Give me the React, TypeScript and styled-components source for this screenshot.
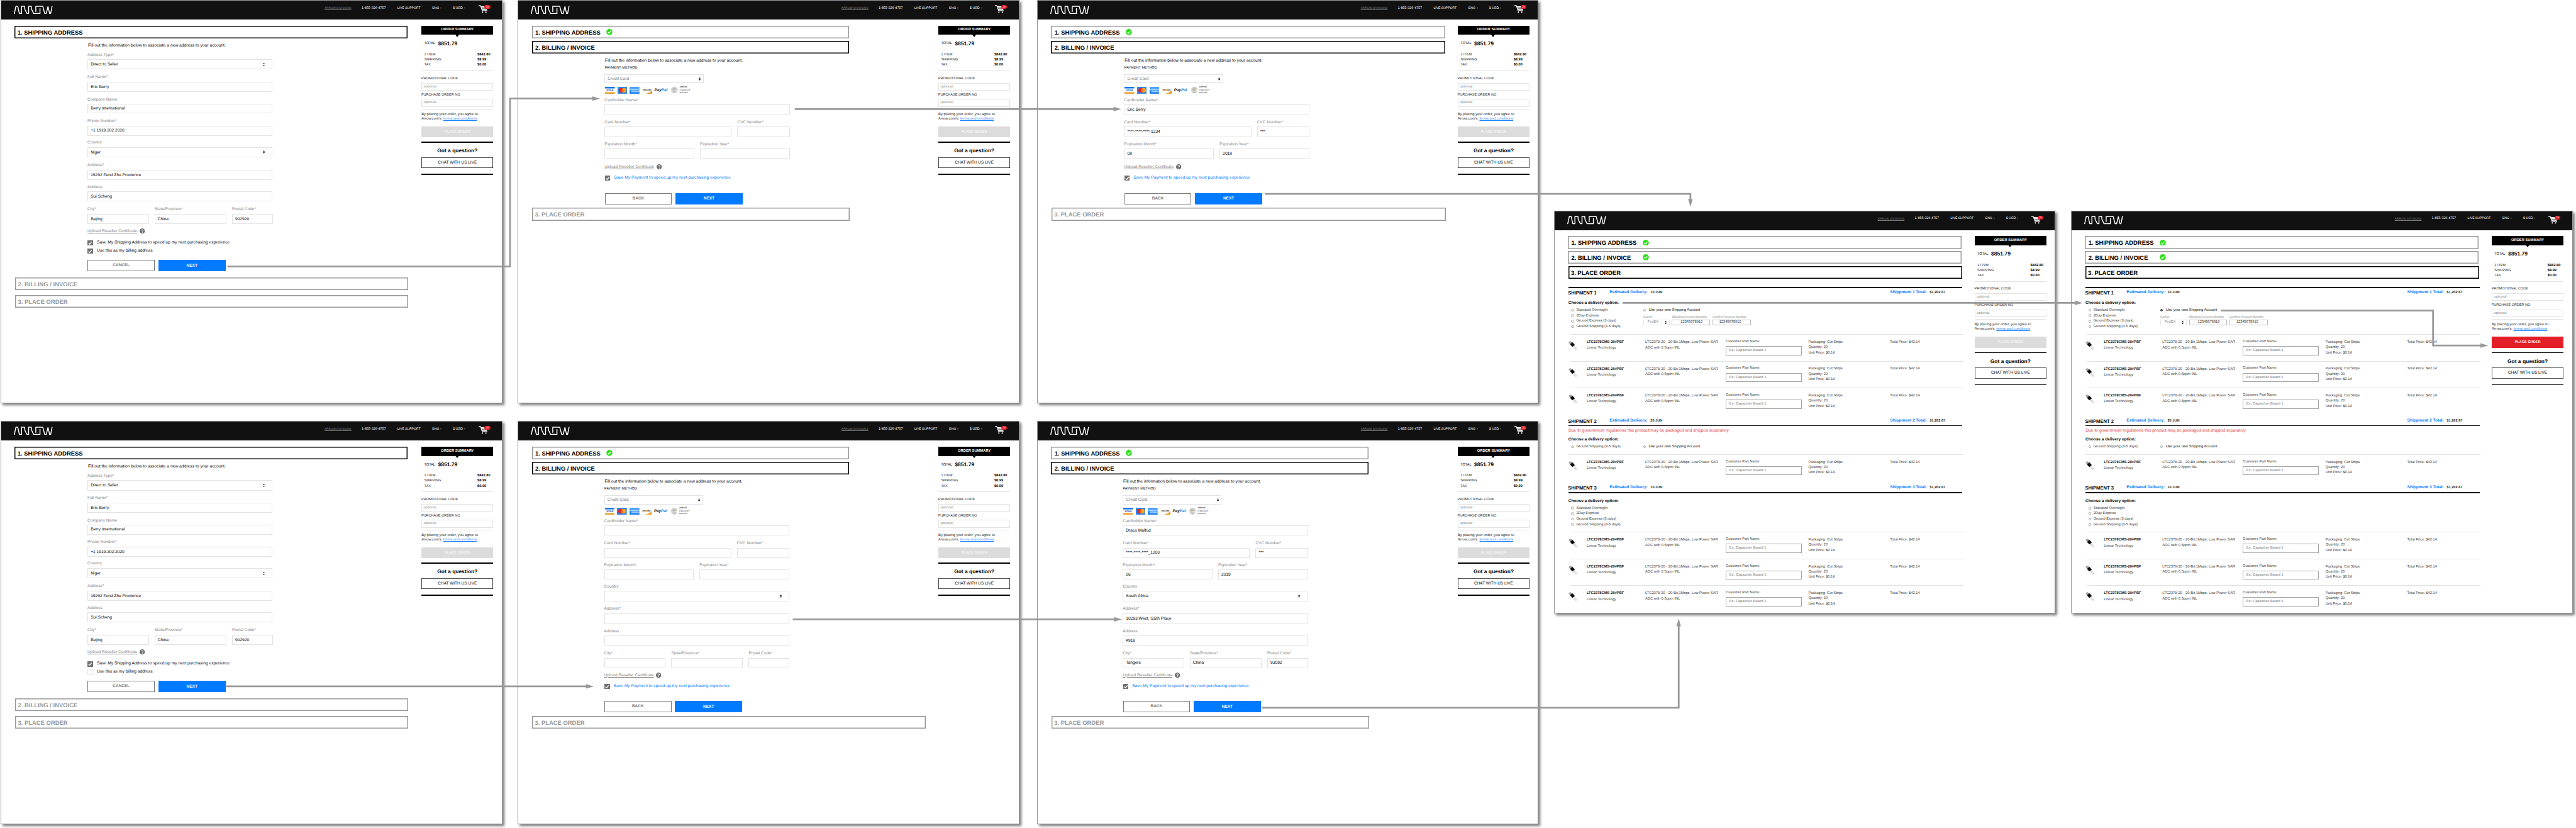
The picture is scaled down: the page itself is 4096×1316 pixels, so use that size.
import React from "react";
import styled, { createGlobalStyle, css } from "styled-components";

const GlobalStyle = createGlobalStyle`
  * { box-sizing: border-box; }
  body {
    margin: 0;
    background: #fff;
    color: #000;
    font-family: "Liberation Sans", Arial, Helvetica, sans-serif;
    text-rendering: geometricPrecision;
  }
`;

const BLUE = "#007aff";
const GREY = "#999";

/* ---------- canvas ---------- */

const Viewport = styled.div`
  width: 4096px;
  height: 1316px;
  overflow: hidden;
`;

const Canvas = styled.main`
  position: relative;
  width: 6379px;
  height: 2049px;
  zoom: 0.64211;
`;

const Artboard = styled.section<{ $x: number; $y: number }>`
  position: absolute;
  left: ${(p) => p.$x}px;
  top: ${(p) => p.$y}px;
  width: 1242px;
  height: 998px;
  display: flex;
  flex-direction: column;
  background: #fff;
  border: 2px solid ${GREY};
  box-shadow: 4px 5px 6px rgba(0, 0, 0, 0.5);
  white-space: nowrap;
`;

const FlowLayer = styled.svg`
  position: absolute;
  inset: 0;
  pointer-events: none;
`;

/* ---------- header ---------- */

const Header = styled.header`
  flex: none;
  height: 47px;
  display: flex;
  align-items: flex-start;
  background: #111;
  color: #fff;
`;

const LogoBox = styled.div`
  width: 800px;
  padding: 11.7px 0 0 31.3px;
  line-height: 0;
`;

const NavItem = styled.span<{ $w: number; $size?: number; $muted?: boolean }>`
  width: ${(p) => p.$w}px;
  height: 36px;
  display: flex;
  align-items: center;
  gap: 3px;
  font-size: ${(p) => p.$size ?? 8}px;
  color: ${(p) => (p.$muted ? "#7a7a7a" : "#fff")};
  text-decoration: ${(p) => (p.$muted ? "underline" : "none")};
`;

const Caret = styled.i`
  border: 2.6px solid transparent;
  border-top: 3.6px solid #888;
  border-bottom: 0;
`;

const Cart = styled.div`
  position: relative;
  padding-top: 11.3px;
  line-height: 0;
`;

const Badge = styled.span`
  position: absolute;
  left: 15.2px;
  top: 11px;
  width: 14.4px;
  height: 9.6px;
  border-radius: 4.8px;
  background: #e31b23;
  color: #fff;
  font-size: 6.2px;
  line-height: 9.8px;
  text-align: center;
`;

const Logo = () => (
  <svg width="96" height="21" viewBox="0 0 96 21" fill="none" stroke="#fff" strokeWidth="2.3" strokeLinejoin="round" strokeLinecap="round">
    <path d="M1.2 19.4 L5.2 1.4 H9.6 L13.6 19.4 H19 V1.4 H26.4 L27.2 9 L32.4 19.4 H36.6 V1.4 H43.2 L44 9 L49 19.4 H64.8 V7" />
    <path d="M54.4 14.4 V1.4 H71.6 L76.6 19.4 H80.4 L84.6 2.2 L88.6 19.4 H91.2 L94.8 1.4" />
  </svg>
);

const TopBar = () => (
  <Header>
    <LogoBox>
      <Logo />
    </LogoBox>
    <NavItem $w={92} $size={7.26} $muted>ARROW DIVISIONS</NavItem>
    <NavItem $w={88.5} $size={8.43}>1-855-326-4757</NavItem>
    <NavItem $w={86.2} $size={7.89}>LIVE SUPPORT</NavItem>
    <NavItem $w={51.3}>ENG <Caret /></NavItem>
    <NavItem $w={63} $size={8.3}>$ USD <Caret /></NavItem>
    <Cart>
      <svg width="30" height="20" viewBox="0 0 30 20" fill="none" stroke="#fff">
        <path d="M0 1.4 H4.6 L9 13.8 H21.5" strokeWidth="1.7" />
        <path d="M6 4.2 H22 M7 6.8 H21.6 M8 9.4 H21.2" strokeWidth="1.9" />
        <path d="M8.5 11.6 H20.8" strokeWidth="1.4" />
        <circle cx="9.8" cy="17.7" r="1.6" fill="#fff" stroke="none" />
        <circle cx="18.3" cy="17.7" r="1.6" fill="#fff" stroke="none" />
      </svg>
      <Badge>25</Badge>
    </Cart>
  </Header>
);

/* ---------- body & step panels ---------- */

const Body = styled.div`
  flex: 1;
  display: flex;
  padding: 15px 0 0 33px;
`;

const Main = styled.div`
  width: 1007.2px;
  flex: none;
`;

type Tone = "active" | "done" | "idle";

const Panel = styled.div<{ $tone: Tone; $w: number; $mt?: number; $ml?: number; $pl?: number }>`
  width: ${(p) => p.$w}px;
  height: 31.6px;
  margin: ${(p) => p.$mt ?? 0}px 0 0 ${(p) => p.$ml ?? 0}px;
  padding-left: ${(p) => p.$pl ?? (p.$tone === "done" ? 8.3 : 6.6)}px;
  display: flex;
  align-items: center;
  box-shadow: inset 0 0 0 2.3px ${(p) => (p.$tone === "active" ? "#000" : GREY)};
  color: ${(p) => (p.$tone === "idle" ? GREY : "#000")};
  font-size: 14.7px;
  font-weight: 700;
`;

const PanelTitle = styled.span`
  width: 176.6px;
  padding-top: 0.6px;
`;

const DoneMark = () => (
  <svg width="15.4" height="15.4" viewBox="0 0 16 16">
    <circle cx="8" cy="8" r="7.8" fill="#2be01a" />
    <path d="M4.2 8.4 L7 11 L11.8 5.4" fill="none" stroke="#fff" strokeWidth="2.2" />
  </svg>
);

type StepProps = { title: string; tone: Tone; w: number; mt?: number; ml?: number; pl?: number };

const Step = ({ title, tone, w, mt, ml, pl }: StepProps) => (
  <Panel $tone={tone} $w={w} $mt={mt} $ml={ml} $pl={pl}>
    <PanelTitle>{title}</PanelTitle>
    {tone === "done" && <DoneMark />}
  </Panel>
);

/* ---------- form parts ---------- */

const Form = styled.div<{ $ml: number; $pt: number }>`
  width: 460px;
  margin-left: ${(p) => p.$ml}px;
  padding-top: ${(p) => p.$pt}px;
`;

const Intro = styled.p<{ $h: number }>`
  height: ${(p) => p.$h}px;
  margin: 0;
  padding-left: 1.3px;
  font-size: 10.5px;
  line-height: 12px;
`;

const SubHead = styled.h4`
  margin: 0;
  height: 21.3px;
  padding-left: 0.4px;
  font-size: 8.79px;
  font-weight: 400;
  line-height: 12px;
`;

const FieldRow = styled.div<{ $h: number }>`
  height: ${(p) => p.$h}px;
  display: flex;
  gap: 14px;
`;

const FieldBox = styled.div<{ $w: number }>`
  width: ${(p) => p.$w}px;
`;

const Label = styled.label`
  display: block;
  height: 12px;
  font-size: 10.2px;
  line-height: 12px;
  color: #858585;
`;

const Input = styled.div<{ $h: number; $gap?: number; $grey?: boolean; $pr?: number; $w?: number }>`
  width: ${(p) => (p.$w ? `${p.$w}px` : "100%")};
  height: ${(p) => p.$h}px;
  margin-top: ${(p) => p.$gap ?? 0}px;
  padding: 0.8px ${(p) => p.$pr ?? 17}px 0 6.4px;
  display: flex;
  align-items: center;
  justify-content: space-between;
  border: 1px solid #e3e3e3;
  color: ${(p) => (p.$grey ? "#808080" : "#000")};
  font-size: 10.34px;
`;

const UpDown = ({ size = 8 }: { size?: number }) => (
  <svg width={size * 0.62} height={size} viewBox="0 0 5 8" fill="#111">
    <path d="M0.2 3.2 L2.5 0 L4.8 3.2 Z M0.2 4.8 L2.5 8 L4.8 4.8 Z" />
  </svg>
);

type FieldProps = { label: string; value?: string; w?: number; gap: number; h: number; select?: boolean };

const Field = ({ label, value, w = 458.5, gap, h, select }: FieldProps) => (
  <FieldBox $w={w}>
    <Label>{label}</Label>
    <Input $h={h} $gap={gap}>
      <span>{value}</span>
      {select && <UpDown />}
    </Input>
  </FieldBox>
);

const Upload = styled.div<{ $h: number }>`
  height: ${(p) => p.$h}px;
  display: flex;
  align-items: flex-start;
  gap: 5.5px;
  font-size: 10.36px;
  line-height: 12px;
  color: #858585;
  text-decoration: underline;
  svg { flex: none; margin-top: -0.9px; }
`;

const UploadLine = ({ h }: { h: number }) => (
  <Upload $h={h}>
    Upload Reseller Certificate
    <svg width="13" height="13" viewBox="0 0 13 13">
      <circle cx="6.5" cy="6.5" r="6.5" fill="#6b6b6b" />
      <path d="M4.4 5 C4.4 2.5 8.6 2.5 8.6 5 C8.6 6.4 6.6 6.4 6.6 8" fill="none" stroke="#fff" strokeWidth="1.6" />
      <circle cx="6.6" cy="9.9" r="0.95" fill="#fff" />
    </svg>
  </Upload>
);

const CheckRow = styled.div<{ $h: number; $blue?: boolean }>`
  height: ${(p) => p.$h}px;
  display: flex;
  align-items: flex-start;
  gap: 9.4px;
  padding-left: 0.6px;
  font-size: 10.43px;
  line-height: 14px;
  color: ${(p) => (p.$blue ? BLUE : "#000")};
`;

const Tick = styled.span<{ $on: boolean }>`
  width: 13.4px;
  height: 13.2px;
  margin-top: 0.3px;
  display: flex;
  ${(p) => (p.$on ? css`background: #717171;` : css`border: 1px solid #e3e3e3;`)}
`;

const Check = ({ on = true, h, blue, children }: { on?: boolean; h: number; blue?: boolean; children: string }) => (
  <CheckRow $h={h} $blue={blue}>
    <Tick $on={on}>
      {on && (
        <svg width="13.4" height="13.2" viewBox="0 0 13 13">
          <path d="M2.8 7 L5.4 9.6 L10.4 3.6" fill="none" stroke="#fff" strokeWidth="2" />
        </svg>
      )}
    </Tick>
    {children}
  </CheckRow>
);

const Buttons = styled.div`
  display: flex;
  gap: 9px;
  padding-left: 0.6px;
`;

const Button = styled.div<{ $primary?: boolean }>`
  width: 166.2px;
  height: 28.2px;
  display: flex;
  align-items: center;
  justify-content: center;
  padding-bottom: ${(p) => (p.$primary ? 0 : 1.4)}px;
  padding-top: ${(p) => (p.$primary ? 1.2 : 0)}px;
  background: ${(p) => (p.$primary ? BLUE : "#fff")};
  box-shadow: ${(p) => (p.$primary ? "none" : "inset 0 0 0 1.7px #7d7d7d")};
  color: ${(p) => (p.$primary ? "#fff" : "#777")};
  font-size: 10.1px;
  font-weight: 700;
`;

/* ---------- payment marks ---------- */

const Marks = styled.div`
  height: 36.2px;
  padding: 8.2px 0 0 1.6px;
  display: flex;
  align-items: flex-start;
`;

const MarkSlot = styled.span<{ $w: number }>`
  width: ${(p) => p.$w}px;
  height: 17.2px;
  display: flex;
  align-items: center;
`;

const PayPal = styled.b`
  font-size: 10px;
  font-style: italic;
  letter-spacing: -0.1px;
  color: #222;
  em { color: #1187e8; }
  small { font-size: 3px; vertical-align: 5px; color: #1187e8; font-weight: 400; }
`;

const CreditMark = styled.span`
  display: flex;
  flex-direction: column;
  color: #777;
  font-size: 7.2px;
  line-height: 8px;
  b { font-size: 4px; line-height: 4.7px; color: #555; }
  b:first-child { font-size: 5px; line-height: 5.7px; font-style: italic; }
`;

const PaymentMarks = () => (
  <Marks>
    <MarkSlot $w={30.2}>
      <svg width="24.4" height="17.2" viewBox="0 0 24.4 17.2">
        <rect width="24.4" height="17.2" rx="1" fill="#fff" />
        <rect width="24.4" height="4" fill="#1677e6" />
        <rect y="13.2" width="24.4" height="4" fill="#eba12a" />
        <text x="12.2" y="11.6" fontSize="7.8" fontWeight="700" fontStyle="italic" textAnchor="middle" fill="#1a63c4">VISA</text>
      </svg>
    </MarkSlot>
    <MarkSlot $w={31}>
      <svg width="24.4" height="17.2" viewBox="0 0 24.4 17.2">
        <rect width="24.4" height="17.2" rx="1" fill="#2f86ea" />
        <circle cx="9" cy="8.6" r="5.9" fill="#e8202a" />
        <circle cx="16" cy="8.6" r="5.9" fill="#f5a623" />
        <path d="M12.5 3.85 A5.9 5.9 0 0 1 12.5 13.35 A5.9 5.9 0 0 1 12.5 3.85" fill="#ee6a1e" />
      </svg>
    </MarkSlot>
    <MarkSlot $w={30.4}>
      <svg width="24.4" height="17.2" viewBox="0 0 24.4 17.2">
        <rect width="24.4" height="17.2" rx="1" fill="#4aa0fa" />
        <path d="M0 9 H4 V17.2 H1 Q0 17.2 0 16.2 Z M4 14.6 H24.4 V16.2 Q24.4 17.2 23.4 17.2 H4 Z" fill="#1f7fec" />
        <text x="12.2" y="8" fontSize="4.3" fontWeight="700" textAnchor="middle" fill="#d8ebff" textLength="21">AMERICAN</text>
        <text x="13.6" y="13.2" fontSize="4.3" fontWeight="700" textAnchor="middle" fill="#d8ebff" textLength="18">EXPRESS</text>
      </svg>
    </MarkSlot>
    <MarkSlot $w={30.4}>
      <svg width="25" height="17.2" viewBox="0 0 25 17.2">
        <rect x="0.3" y="0.3" width="24.4" height="16.6" rx="1" fill="#fff" stroke="#ddd" strokeWidth="0.6" />
        <path d="M25 8 C22 13 15 16 8 17.2 H25 Z" fill="#f09a26" />
        <text x="12.4" y="9.6" fontSize="4.6" fontWeight="700" textAnchor="middle" fill="#222" textLength="20">DISCOVER</text>
        <circle cx="12.6" cy="8" r="1.7" fill="#f09a26" />
      </svg>
    </MarkSlot>
    <MarkSlot $w={41.9}>
      <PayPal>Pay<em>Pal</em><small>™</small></PayPal>
    </MarkSlot>
    <MarkSlot $w={20.2}>
      <svg width="16.4" height="16.4" viewBox="0 0 16.4 16.4" fill="none" stroke="#8a8a8a" strokeWidth="0.7">
        <circle cx="8.2" cy="8.2" r="7.7" />
        <ellipse cx="8.2" cy="8.2" rx="3.6" ry="7.7" />
        <path d="M8.2 0.5 V15.9 M2 4 H14.4 M2 12.4 H14.4" />
        <rect x="1" y="5.9" width="14.4" height="4.8" fill="#fff" stroke="none" />
        <text x="8.2" y="9.9" fontSize="4.6" fontWeight="700" textAnchor="middle" fill="#666" stroke="none">SWIFT</text>
      </svg>
    </MarkSlot>
    <MarkSlot $w={30}>
      <CreditMark>
        <b>ARROW</b>CREDIT<b>SERVICES</b>
      </CreditMark>
    </MarkSlot>
  </Marks>
);

/* ---------- order summary ---------- */

const Sidebar = styled.aside`
  width: 178px;
  flex: none;
`;

const Banner = styled.div`
  position: relative;
  height: 22.8px;
  padding-bottom: 2px;
  display: flex;
  align-items: center;
  justify-content: center;
  background: #000;
  color: #fff;
  font-size: 9.04px;
  font-weight: 700;
  &::after {
    content: "";
    position: absolute;
    top: 22px;
    left: 83.5px;
    border: 5.5px solid transparent;
    border-top: 7px solid #000;
    border-bottom: 0;
  }
`;

const TotalRow = styled.div`
  display: flex;
  align-items: center;
  gap: 7px;
  height: 16px;
  margin: 12.9px 0 14.4px;
  padding-left: 6.7px;
  font-size: 8.72px;
  b { font-size: 13.33px; color: #000; }
  span { padding-top: 2px; }
`;

const CostRow = styled.div`
  display: grid;
  grid-template-columns: 131.7px auto;
  padding-left: 6.7px;
  height: 12.7px;
  line-height: 12.7px;
  font-size: 8.7px;
  color: #222;
  b { font-size: 8.85px; color: #000; }
`;

const Rule = styled.div<{ $mt: number; $mb: number; $bold?: boolean }>`
  height: ${(p) => (p.$bold ? 2.6 : 1.5)}px;
  margin: ${(p) => p.$mt}px 0 ${(p) => p.$mb}px;
  background: ${(p) => (p.$bold ? "#000" : "#e2e2e2")};
`;

const SideLabel = styled.div<{ $size: number }>`
  height: 12px;
  margin-left: -0.4px;
  line-height: 12px;
  font-size: ${(p) => p.$size}px;
  color: #222;
`;

const SideInput = styled.div<{ $mb: number }>`
  height: 19.2px;
  margin: 3.3px 0 ${(p) => p.$mb}px;
  padding-left: 3.6px;
  border: 1px solid #e3e3e3;
  font-size: 9px;
  line-height: 16.6px;
  color: #858585;
`;

const Terms = styled.p`
  margin: 0 0 12.9px;
  font-size: 9.05px;
  line-height: 10.7px;
  color: #222;
  a { color: #1a84ff; text-decoration: underline; }
`;

const PlaceOrder = styled.div<{ $on?: boolean }>`
  height: 27.4px;
  display: flex;
  align-items: center;
  justify-content: center;
  background: ${(p) => (p.$on ? "#e31e26" : "#dcdcdc")};
  color: ${(p) => (p.$on ? "#fff" : "#f6f6f6")};
  font-size: 8.75px;
  font-weight: 700;
`;

const Question = styled.h3`
  margin: 0 0 6.3px;
  height: 18px;
  line-height: 18px;
  text-align: center;
  font-size: 13.14px;
  color: #000;
`;

const ChatButton = styled.div`
  height: 26.8px;
  display: flex;
  align-items: center;
  justify-content: center;
  box-shadow: inset 0 0 0 1.3px #222;
  font-size: 10.1px;
`;

const OrderSummary = ({ ready }: { ready?: boolean }) => (
  <Sidebar>
    <Banner>ORDER SUMMARY</Banner>
    <TotalRow><span>TOTAL</span><b>$851.79</b></TotalRow>
    <CostRow>1 ITEM<b>$842.80</b></CostRow>
    <CostRow>SHIPPING<b>$8.99</b></CostRow>
    <CostRow>TAX<b>$0.00</b></CostRow>
    <Rule $mt={7.2} $mb={13.3} />
    <SideLabel $size={8.65}>PROMOTIONAL CODE</SideLabel>
    <SideInput $mb={5.8}>optional</SideInput>
    <SideLabel $size={8.55}>PURCHASE ORDER NO</SideLabel>
    <SideInput $mb={5}>optional</SideInput>
    <Rule $mt={0} $mb={7.6} />
    <Terms>
      By placing your order, you agree to
      <br />
      Arrow.com's. <a>terms and conditions</a>
    </Terms>
    <PlaceOrder $on={ready}>PLACE ORDER</PlaceOrder>
    <Rule $bold $mt={10.6} $mb={11.6} />
    <Question>Got a question?</Question>
    <ChatButton>CHAT WITH US LIVE</ChatButton>
    <Rule $bold $mt={14} $mb={0} />
  </Sidebar>
);

/* ---------- shipping & billing screens ---------- */

const INTRO = "Fill out the information below to associate a new address to your account.";

const ShippingScreen = ({ y, billing }: { y: number; billing: boolean }) => (
  <Artboard $x={2} $y={y}>
    <TopBar />
    <Body>
      <Main>
        <Step title="1. SHIPPING ADDRESS" tone="active" w={973} />
        <Form $ml={180} $pt={12.8}>
          <Intro $h={22.7}>{INTRO}</Intro>
          <FieldRow $h={55.3}><Field label="Address Type*" value="Direct to Seller" gap={4.1} h={25.4} select /></FieldRow>
          <FieldRow $h={54.8}><Field label="Full Name*" value="Eric Berry" gap={4.8} h={24.7} /></FieldRow>
          <FieldRow $h={53.7}><Field label="Company Name" value="Berry International" gap={4} h={24.4} /></FieldRow>
          <FieldRow $h={53.3}><Field label="Phone Number*" value="+1 1919.202.2020" gap={5} h={24.3} /></FieldRow>
          <FieldRow $h={55.3}><Field label="Country" value="Niger" gap={4.7} h={24.3} select /></FieldRow>
          <FieldRow $h={55.4}><Field label="Address*" value="19292 Fend Zhu Provience" gap={5.7} h={25} /></FieldRow>
          <FieldRow $h={54.6}><Field label="Address" value="Sui Scheng" gap={3.3} h={24.7} /></FieldRow>
          <FieldRow $h={53.9}>
            <Field label="City*" value="Bejing" w={152} gap={4.7} h={24.4} />
            <Field label="State/Province*" value="China" w={178} gap={4.7} h={24.4} />
            <Field label="Postal Code*" value="902920" w={101} gap={4.7} h={24.4} />
          </FieldRow>
          <UploadLine h={27.8} />
          <Check h={20.2}>Save My Shipping Address to speed up my next purchasing experience</Check>
          <Check h={28.5} on={billing}>Use this as my billing address</Check>
          <Buttons>
            <Button>CANCEL</Button>
            <Button $primary>NEXT</Button>
          </Buttons>
        </Form>
        <Step title="2. BILLING / INVOICE" tone="idle" w={973} mt={15} ml={1.3} />
        <Step title="3. PLACE ORDER" tone="idle" w={973} mt={12.4} ml={1.3} />
      </Main>
      <OrderSummary />
    </Body>
  </Artboard>
);

type BillingData = {
  name?: string; card?: string; cvc?: string; month?: string; year?: string;
  country?: string; address1?: string; address2?: string; city?: string; state?: string; postal?: string;
};

type BillingProps = {
  x: number; y: number; inset: number; full?: boolean; topW: number; bottomW: number; data?: BillingData;
};

const BillingScreen = ({ x, y, inset, full, topW, bottomW, data = {} }: BillingProps) => (
  <Artboard $x={x} $y={y}>
    <TopBar />
    <Body>
      <Main>
        <Step title="1. SHIPPING ADDRESS" tone="done" w={topW} ml={0.4} />
        <Step title="2. BILLING / INVOICE" tone="active" w={topW} mt={5.6} ml={0.4} pl={8.5} />
        <Form $ml={inset} $pt={12.6}>
          <Intro $h={17.9}>{INTRO}</Intro>
          <SubHead>PAYMENT METHOD</SubHead>
          <Input $h={22.2} $w={245} $pr={5.4} $grey>
            <span>Credit Card</span>
            <UpDown />
          </Input>
          <PaymentMarks />
          <FieldRow $h={54.8}><Field label="Cardholder Name*" value={data.name} gap={4} h={25} /></FieldRow>
          <FieldRow $h={54.8}>
            <Field label="Card Number*" value={data.card} w={315} gap={4.5} h={25.3} />
            <Field label="CVC Number*" value={data.cvc} w={130} gap={4.5} h={25.3} />
          </FieldRow>
          <FieldRow $h={full ? 52.6 : 55.7}>
            <Field label="Expiration Month*" value={data.month} w={222.4} gap={2.9} h={25.4} />
            <Field label="Expiration Year*" value={data.year} w={222.4} gap={2.9} h={25.4} />
          </FieldRow>
          {full && (
            <>
              <FieldRow $h={55.4}><Field label="Country" value={data.country} gap={4.4} h={25.1} select /></FieldRow>
              <FieldRow $h={55.4}><Field label="Address*" value={data.address1} gap={5} h={25.4} /></FieldRow>
              <FieldRow $h={54.5}><Field label="Address" value={data.address2} gap={3} h={25.4} /></FieldRow>
              <FieldRow $h={53.8}>
                <Field label="City*" value={data.city} w={152} gap={4.5} h={25} />
                <Field label="State/Province*" value={data.state} w={178} gap={4.5} h={25} />
                <Field label="Postal Code*" value={data.postal} w={101} gap={4.5} h={25} />
              </FieldRow>
            </>
          )}
          <UploadLine h={full ? 26.7 : 26.1} />
          <Check h={full ? 43 : 43.6} blue>Save My Payment to speed up my next purchasing experience</Check>
          <Buttons>
            <Button>BACK</Button>
            <Button $primary>NEXT</Button>
          </Buttons>
        </Form>
        <Step title="3. PLACE ORDER" tone="idle" w={bottomW} mt={8.9} ml={1.3} />
      </Main>
      <OrderSummary />
    </Body>
  </Artboard>
);

/* ---------- place-order screens ---------- */

const ShipRule = styled.div<{ $mt: number }>`
  width: 976px;
  height: 2.3px;
  margin: ${(p) => p.$mt}px 0 0 1.2px;
  background: #111;
`;

const ShipHead = styled.div<{ $mt: number }>`
  display: grid;
  grid-template-columns: 102.7px 694.9px auto;
  height: 14px;
  margin-top: ${(p) => p.$mt}px;
  padding-left: 0.3px;
  line-height: 14px;
  font-size: 8.8px;
  font-weight: 700;
  color: #222;
  h3 { margin: 0; font-size: 11.83px; color: #000; }
  em { margin-right: 7px; font-size: 10.2px; font-style: normal; color: ${BLUE}; }
`;

const Warning = styled.p`
  margin: 5.5px 0 10.3px 1.6px;
  font-size: 10.48px;
  line-height: 12px;
  color: #e0353b;
`;

const Choose = styled.h4<{ $mt: number }>`
  margin: ${(p) => p.$mt}px 0 4.7px 1.2px;
  font-size: 10.23px;
  line-height: 12px;
  color: #000;
`;

const Options = styled.div<{ $mb: number }>`
  display: grid;
  grid-template-columns: 178.2px auto;
  margin: 0 0 ${(p) => p.$mb}px 8.3px;
`;

const Option = styled.div<{ $own?: boolean }>`
  display: flex;
  align-items: center;
  gap: ${(p) => (p.$own ? 7 : 5.6)}px;
  height: 13.5px;
  font-size: ${(p) => (p.$own ? 9.01 : 8.91)}px;
  color: ${(p) => (p.$own ? "#000" : "#333")};
`;

const Radio = styled.i<{ $on?: boolean }>`
  width: 7px;
  height: 7px;
  border-radius: 50%;
  border: ${(p) => (p.$on ? "1px solid #333" : "1px solid #aaa")};
  ${(p) => p.$on && css`background: radial-gradient(circle, #111 45%, #fff 55%);`}
`;

const Account = styled.div`
  display: grid;
  grid-template-columns: 65.2px 94.6px 94.6px;
  column-gap: 6px;
  row-gap: 1.2px;
  margin-top: 7.7px;
  font-size: 7.53px;
  line-height: 8px;
  color: #808080;
`;

const AccountInput = styled.div<{ $pl: number; $carrier?: boolean }>`
  height: 14.5px;
  display: flex;
  align-items: center;
  gap: 15px;
  padding-left: ${(p) => p.$pl}px;
  border: 1px solid ${(p) => (p.$carrier ? "#e3e3e3" : "#bdbdbd")};
  font-size: 8.9px;
  color: ${(p) => (p.$carrier ? "#858585" : "#333")};
`;

const Part = styled.div<{ $ml: number }>`
  width: ${(p) => 980 - p.$ml}px;
  height: 66.2px;
  margin-left: ${(p) => p.$ml}px;
  border-top: 1px solid #e3e3e3;
`;

const PartGrid = styled.div<{ $shift: number }>`
  display: grid;
  grid-template-columns: 45.7px 144.7px 199.6px 204.8px 202.1px auto;
  margin-left: ${(p) => -p.$shift}px;
  color: #333;
`;

const PartCell = styled.div<{ $pt: number; $lh?: number; $size?: number }>`
  padding-top: ${(p) => p.$pt}px;
  line-height: ${(p) => p.$lh ?? 13.2}px;
  font-size: ${(p) => p.$size ?? 8.97}px;
  b { color: #111; }
`;

const PartInput = styled.div`
  width: 188px;
  height: 22.8px;
  margin-top: 4px;
  padding: 1px 0 0 7px;
  display: flex;
  align-items: center;
  border: 1px solid #a5a5a5;
  font-size: 8.81px;
  font-weight: 700;
  color: #999;
`;

const PartPhoto = () => (
  <svg width="23" height="23" viewBox="0 0 23 23">
    <path d="M0.4 3.4 L3.8 0.4 Q6 0.2 9.6 3.6 L4.2 8 Z" fill="#8f8f8f" />
    <circle cx="4" cy="3.4" r="1.2" fill="#fff" />
    <path d="M10.2 13.4 L18.6 22 M12 12.2 L20.4 21.2 M13.6 10.8 L22 20.2" stroke="#a3a3a3" strokeWidth="0.9" />
    <path d="M3.8 8 L10 3.2 L15.8 9.8 L9.4 14.6 Z" fill="#0c0c0c" />
  </svg>
);

const PartRow = ({ shift = 3.9 }: { shift?: number }) => (
  <Part $ml={shift}>
    <PartGrid $shift={shift - 1}>
      <PartCell $pt={15.4} $lh={0}><PartPhoto /></PartCell>
      <PartCell $pt={12.3} $lh={14.3}>
        <b>LTC2378CMS-20#PBF</b>
        <br />
        Linear Technology
      </PartCell>
      <PartCell $pt={12} $lh={13.7} $size={9.02}>
        LTC2378-20 - 20-Bit,1Msps, Low Power SAR
        <br />
        ADC with 0.5ppm INL
      </PartCell>
      <PartCell $pt={11.8} $lh={12} $size={8.86}>
        Customer Part Name:
        <PartInput>Ex: Capacitor Board 1</PartInput>
      </PartCell>
      <PartCell $pt={11.8} $size={8.82}>
        Packaging: Cut Strips
        <br />
        Quantity: 20
        <br />
        Unit Price: $0.14
      </PartCell>
      <PartCell $pt={11.8} $size={8.93}>Total Price: $42.14</PartCell>
    </PartGrid>
  </Part>
);

const ShipmentHead = ({ n, date, mt }: { n: number; date: string; mt: number }) => (
  <ShipHead $mt={mt}>
    <h3>SHIPMENT {n}</h3>
    <span><em>Estimated Delivery:</em>{date}</span>
    <span><em>Shippment {n} Total:</em>$1,202.67</span>
  </ShipHead>
);

const OwnAccount = ({ on }: { on?: boolean }) => (
  <Option $own><Radio $on={on} />Use your own Shipping Account</Option>
);

const SPEEDS = ["Standard Overnight", "2Day Express", "Ground Express (3 days)", "Ground Shipping (3-5 days)"];

const SpeedList = () => (
  <div>
    {SPEEDS.map((s) => (
      <Option key={s}><Radio />{s}</Option>
    ))}
  </div>
);

const PlaceOrderScreen = ({ x, ready }: { x: number; ready?: boolean }) => (
  <Artboard $x={x} $y={521}>
    <TopBar />
    <Body>
      <Main>
        <Step title="1. SHIPPING ADDRESS" tone="done" w={975} ml={0.2} />
        <Step title="2. BILLING / INVOICE" tone="done" w={975} mt={5.4} ml={0.2} />
        <Step title="3. PLACE ORDER" tone="active" w={975} mt={5.8} ml={1} />

        <ShipRule $mt={20.2} />
        <ShipmentHead n={1} date="10 JUN" mt={5.2} />
        <Choose $mt={12.2}>Choose a delivery option:</Choose>
        <Options $mb={12.7}>
          <SpeedList />
          <div>
            <OwnAccount on={ready} />
            <Account>
              <span>Carrier</span>
              <span>Shipping Account Number</span>
              <span>Confirm Account Number</span>
              <AccountInput $pl={9.2} $carrier>FedEX<UpDown size={8.4} /></AccountInput>
              <AccountInput $pl={20}>12345678910</AccountInput>
              <AccountInput $pl={15}>12345678910</AccountInput>
            </Account>
          </div>
        </Options>
        <PartRow />
        <PartRow />
        <PartRow />

        <ShipmentHead n={2} date="20 JUN" mt={9} />
        <ShipRule $mt={3.3} />
        <Warning>Due to government regulations this product may be packaged and shipped separately</Warning>
        <Choose $mt={0}>Choose a delivery option:</Choose>
        <Options $mb={11.7}>
          <Option><Radio />Ground Shipping (3-5 days)</Option>
          <OwnAccount />
        </Options>
        <PartRow shift={1.6} />

        <ShipmentHead n={3} date="10 JUN" mt={10.4} />
        <ShipRule $mt={3.2} />
        <Choose $mt={14}>Choose a delivery option:</Choose>
        <Options $mb={11.7}>
          <SpeedList />
        </Options>
        <PartRow />
        <PartRow />
        <PartRow />
      </Main>
      <OrderSummary ready={ready} />
    </Body>
  </Artboard>
);

/* ---------- flow arrows ---------- */

const LINES = [
  "M563 659.7 H1263 V244 H1469",
  "M1968 270 H2759",
  "M3132 480 H4186 V495",
  "M560 1699 H1453",
  "M1963 1533 H2761",
  "M3124 1751.8 H4157 V1548",
  "M4018 749.7 H5140",
  "M5499 768.7 H6025 V855.3 H6143",
];

const HEADS: [number, number, number][] = [
  [1486, 244, 0],
  [2777, 270, 0],
  [4186, 512, 90],
  [1470.5, 1699, 0],
  [2778.6, 1533, 0],
  [4157, 1531, -90],
  [5157.6, 749.7, 0],
  [6161.6, 855.3, 0],
];

const Arrows = () => (
  <FlowLayer width="6379" height="2049" viewBox="0 0 6379 2049">
    {LINES.map((d) => (
      <path key={d} d={d} fill="none" stroke={GREY} strokeWidth="4.3" />
    ))}
    {HEADS.map(([hx, hy, r]) => (
      <path key={`${hx}-${hy}`} d="M0 0 L-19.5 -5.6 V5.6 Z" fill={GREY} transform={`translate(${hx} ${hy}) rotate(${r})`} />
    ))}
  </FlowLayer>
);

export default function App() {
  return (
    <>
      <GlobalStyle />
      <Viewport>
        <Canvas>
          <ShippingScreen y={0} billing />
          <BillingScreen x={1282} y={0} inset={180.4} topW={786} bottomW={786} />
          <BillingScreen
            x={2568}
            y={0}
            inset={181}
            topW={976}
            bottomW={976}
            data={{ name: "Eric Berry", card: "****-****-****-1234", cvc: "***", month: "08", year: "2018" }}
          />
          <ShippingScreen y={1042} billing={false} />
          <BillingScreen x={1282} y={1042} inset={179.4} full topW={786} bottomW={974} />
          <BillingScreen
            x={2568}
            y={1042}
            inset={177.6}
            full
            topW={786}
            bottomW={786}
            data={{
              name: "Draco Malfod",
              card: "****-****-****_1203",
              cvc: "***",
              month: "06",
              year: "2019",
              country: "South Africa",
              address1: "10293 West. !25th Place",
              address2: "#918",
              city: "Tangers",
              state: "China",
              postal: "93092",
            }}
          />
          <PlaceOrderScreen x={3848} />
          <PlaceOrderScreen x={5128.5} ready />
          <Arrows />
        </Canvas>
      </Viewport>
    </>
  );
}
